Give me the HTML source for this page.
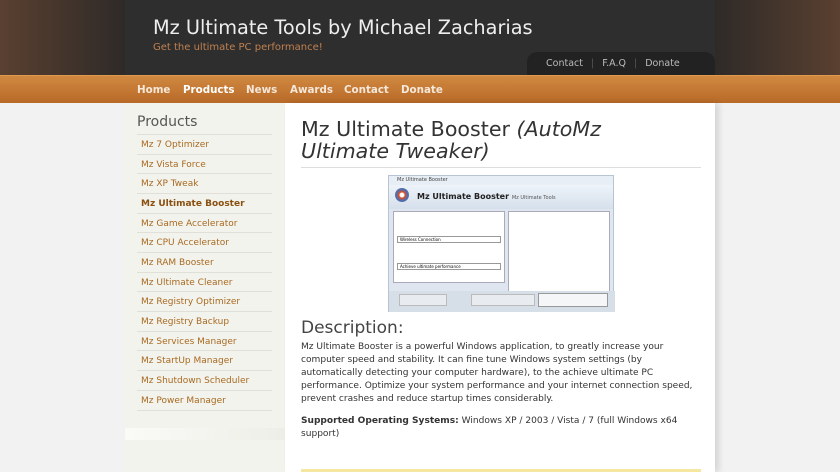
<!DOCTYPE html><html><head><style>
*{margin:0;padding:0;box-sizing:border-box}
body{width:840px;height:472px;overflow:hidden;background:#f2f2f2;font-family:"DejaVu Sans","Liberation Sans",sans-serif;position:relative}
#topbg{position:absolute;left:0;top:0;width:840px;height:75px;background:linear-gradient(90deg,#5a4030,#2e2a28 15%,#2e2a28 85%,#5a4030)}
#head{position:absolute;left:125px;top:0;width:590px;height:75px;background:#2e2e2e}
#nav{position:absolute;left:0;top:75px;width:840px;height:28px;background:linear-gradient(#d08840,#b86a28);border-top:1px solid #e09a50}
#nav a{position:absolute;top:8px;color:#f5e8da;font-weight:bold;font-size:10.3px;text-decoration:none}
#side{position:absolute;left:125px;top:103px;width:160px;height:369px;background:#f3f3ee}
#main{position:absolute;left:285px;top:103px;width:430px;height:369px;background:#fff;box-shadow:4px 0 6px rgba(0,0,0,.12)}
.sl{position:absolute;left:12px;width:135px;border-top:1px solid #e0e0d8;font-size:9px;color:#a86a20;padding:5px 4px;height:20px}
.t{font-size:9.05px;line-height:13px;color:#333}
</style></head><body>
<div id="topbg"></div>
<div id="head">
<div style="position:absolute;left:28px;top:16px;font-size:19.3px;color:#eee">Mz Ultimate Tools by Michael Zacharias</div>
<div style="position:absolute;left:28px;top:42px;font-size:10px;color:#c08050">Get the ultimate PC performance!</div>
<div style="position:absolute;left:402px;top:52px;width:188px;height:23px;background:#222;border-radius:10px 10px 0 0;font-size:9.5px;color:#bbb;padding:6px 0 0 19px">Contact <span style="color:#555;margin:0 5px">|</span> F.A.Q <span style="color:#555;margin:0 5px">|</span> Donate</div>
</div>
<div id="nav"><a style="left:137px">Home</a><a style="left:183px;color:#fff">Products</a><a style="left:246px">News</a><a style="left:290px">Awards</a><a style="left:344px">Contact</a><a style="left:401px">Donate</a>
<div style="position:absolute;left:202px;top:23px;border:4px solid transparent;border-bottom-color:#f3f3ee"></div></div>
<div id="side">
<div style="position:absolute;left:12px;top:11px;font-size:14px;color:#555">Products</div>
<div class="sl" style="top:31px">Mz 7 Optimizer</div>
<div class="sl" style="top:51px">Mz Vista Force</div>
<div class="sl" style="top:70px">Mz XP Tweak</div>
<div class="sl" style="top:90px;font-weight:bold;color:#8a5010">Mz Ultimate Booster</div>
<div class="sl" style="top:110px">Mz Game Accelerator</div>
<div class="sl" style="top:129px">Mz CPU Accelerator</div>
<div class="sl" style="top:149px">Mz RAM Booster</div>
<div class="sl" style="top:169px">Mz Ultimate Cleaner</div>
<div class="sl" style="top:188px">Mz Registry Optimizer</div>
<div class="sl" style="top:208px">Mz Registry Backup</div>
<div class="sl" style="top:228px">Mz Services Manager</div>
<div class="sl" style="top:247px">Mz StartUp Manager</div>
<div class="sl" style="top:267px">Mz Shutdown Scheduler</div>
<div class="sl" style="top:287px">Mz Power Manager</div>
<div class="sl" style="top:307px;height:1px;padding:0"></div>
<div style="position:absolute;left:0;top:325px;width:160px;height:12px;background:linear-gradient(90deg,#fafaf7,#eeeee8)"></div>
</div>
<div id="main">
<div style="position:absolute;left:16px;top:15px;width:400px;height:50px;border-bottom:1px solid #ddd"></div>
<div style="position:absolute;left:16px;top:15px;width:340px;font-size:20.6px;color:#333;line-height:22px">Mz Ultimate Booster <i>(AutoMz Ultimate Tweaker)</i></div>
<div style="position:absolute;left:103px;top:72px;width:226px;height:137px;background:#dfe6ef;border:1px solid #b8c4d4">
<div style="height:9px;background:#e8eef5;font-size:5px;color:#444;padding:1px 8px">Mz Ultimate Booster</div>
<div style="height:24px;background:linear-gradient(#eef3f9,#d5e0ec);font-size:8px;font-weight:bold;color:#222;padding:7px 0 0 28px">Mz Ultimate Booster <span style="font-weight:normal;font-size:5px;color:#555">Mz Ultimate Tools</span></div>
<div style="position:absolute;left:6px;top:12px;width:14px;height:14px;border-radius:50%;background:radial-gradient(#fff 20%,#e05020 30%,#4070c0 60%,#c08030)"></div>
<div style="position:absolute;left:4px;top:35px;width:112px;height:72px;background:#fff;border:1px solid #aab"></div>
<div style="position:absolute;left:119px;top:35px;width:102px;height:92px;background:#fff;border:1px solid #aab"></div>
<div style="position:absolute;left:8px;top:60px;width:104px;height:7px;border:1px solid #999;background:#fff;font-size:4px;padding-left:2px">Wireless Connection</div>
<div style="position:absolute;left:8px;top:87px;width:104px;height:7px;border:1px solid #999;background:#fff;font-size:4px;padding-left:2px">Achieve ultimate performance</div>
<div style="position:absolute;left:0;top:115px;width:226px;height:21px;background:#d6dee8"></div>
<div style="position:absolute;left:10px;top:118px;width:48px;height:12px;background:#e8ecf0;border:1px solid #bbb"></div>
<div style="position:absolute;left:82px;top:118px;width:64px;height:12px;background:#e8ecf0;border:1px solid #bbb"></div>
<div style="position:absolute;left:149px;top:117px;width:70px;height:14px;background:#f4f6f8;border:1px solid #999"></div>
</div>
<div style="position:absolute;left:16px;top:215px;font-size:17px;color:#444">Description:</div>
<div class="t" style="position:absolute;left:16px;top:238px;width:402px">Mz Ultimate Booster is a powerful Windows application, to greatly increase your computer speed and stability. It can fine tune Windows system settings (by automatically detecting your computer hardware), to the achieve ultimate PC performance. Optimize your system performance and your internet connection speed, prevent crashes and reduce startup times considerably.</div>
<div class="t" style="position:absolute;left:16px;top:312px;width:402px"><b>Supported Operating Systems:</b> Windows XP / 2003 / Vista / 7 (full Windows x64 support)</div>
<div style="position:absolute;left:16px;top:366px;width:400px;height:3px;background:#f5e6a0"></div>
</div>
</body></html>
